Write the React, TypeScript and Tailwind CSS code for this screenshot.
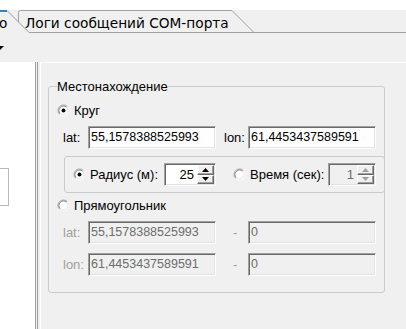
import React from "react";

const Radio = ({ checked = false }: { checked?: boolean }) => (
  <svg width="13" height="13" viewBox="0 0 13 13" className="shrink-0">
    <circle cx="6.5" cy="6.5" r="5" fill="#ffffff" />
    <path d="M2.61 10.39 A5.5 5.5 0 0 1 10.39 2.61" stroke="#a0a0a0" fill="none" />
    <path d="M10.39 2.61 A5.5 5.5 0 0 1 2.61 10.39" stroke="#ffffff" fill="none" />
    <path d="M3.32 9.68 A4.5 4.5 0 0 1 9.68 3.32" stroke="#8a8a8a" fill="none" />
    <path d="M9.68 3.32 A4.5 4.5 0 0 1 3.32 9.68" stroke="#e3e3e3" fill="none" />
    {checked && <circle cx="6.5" cy="6.5" r="2" fill="#000000" />}
  </svg>
);

const SpinBtn = ({ up, disabled }: { up?: boolean; disabled?: boolean }) => (
  <div className="flex-1 flex items-center justify-center bg-[#f0f0f0] border border-t-white border-l-white border-r-[#696969] border-b-[#696969] shadow-[inset_-1px_-1px_0_#a0a0a0]">
    <svg width="7" height="4" viewBox="0 0 7 4">
      <polygon points={up ? "3.5,0 7,4 0,4" : "0,0 7,0 3.5,4"} fill={disabled ? "#a0a0a0" : "#000000"} />
    </svg>
  </div>
);

const Spin = ({ value, width, disabled }: { value: string; width: string; disabled?: boolean }) => (
  <div
    className={`flex h-[23px] ${width} border border-[#a0a0a0] border-r-white border-b-white shadow-[inset_1px_1px_0_#696969,inset_-1px_-1px_0_#e3e3e3] p-[1px] ${
      disabled ? "bg-[#f0f0f0] text-[#6d6d6d]" : "bg-white text-black"
    }`}
  >
    <div className="flex-1 text-right pr-[3px] leading-[19px]">{value}</div>
    <div className="flex flex-col w-[17px]">
      <SpinBtn up disabled={disabled} />
      <SpinBtn disabled={disabled} />
    </div>
  </div>
);

const Field = ({ value, disabled }: { value: string; disabled?: boolean }) => (
  <div
    className={`h-[23px] w-[128px] border border-[#a0a0a0] border-r-white border-b-white shadow-[inset_1px_1px_0_#696969,inset_-1px_-1px_0_#e3e3e3] pl-[2px] leading-[21px] text-[12.5px] ${
      disabled ? "bg-[#f0f0f0] text-[#6d6d6d]" : "bg-white text-black"
    }`}
  >
    {value}
  </div>
);

export default function App() {
  return (
    <div className="w-[406px] h-[329px] overflow-hidden bg-[#f0f0f0] flex flex-col font-['Liberation_Sans',Arial,sans-serif] text-[13px] text-black">
      <div className="h-[10px] shrink-0 bg-white" />

      {/* tabs */}
      <div className="relative h-[23px] shrink-0 font-['DejaVu_Sans',sans-serif] text-[13.7px]">
        <svg className="absolute inset-0" width="406" height="23" viewBox="0 0 406 23">
          <path d="M18.5 22 V2.5 Q18.5 0.5 20.5 0.5 H232 L253.5 22" stroke="#a0a0a0" fill="none" />
          <polygon points="0,0 7,0 29,22 0,22" fill="#f0f0f0" />
          <path d="M7 0.5 L29 22.5" stroke="#9a9a9a" fill="none" />
          <rect x="0" y="0" width="7" height="2" fill="#3c7fb1" />
          <path d="M29 22.5 H406" stroke="#a0a0a0" fill="none" />
        </svg>
        <div className="relative flex h-full pt-[3px] leading-[20px]">
          <span className="-ml-[1px] w-[26px]">о</span>
          <span>Логи сообщений COM-порта</span>
        </div>
      </div>

      {/* toolbar */}
      <div className="h-[29px] shrink-0 pt-[13px]">
        <svg width="4" height="4" viewBox="0 0 4 4">
          <polygon points="0,0 4,0 0,4" fill="#000000" />
        </svg>
      </div>

      <div className="flex flex-1 min-h-0">
        {/* left panel */}
        <div className="w-[36px] shrink-0 bg-white border-r border-[#a0a0a0] pt-[106px]">
          <div className="w-[9px] h-[38px] border border-l-0 border-[#b9b9b9]" />
        </div>
        <div className="w-[1px] shrink-0" />
        <div className="w-[1px] shrink-0 bg-[#a0a0a0]" />
        <div className="w-[2px] shrink-0" />

        {/* main panel */}
        <div className="flex-1 border-l border-t border-white">
          <fieldset className="ml-[7px] mt-[16px] w-[337px] border border-[#cbcbcb] rounded-[3px] pl-[8px] pb-[16px]">
            <legend className="leading-[15px]">Местонахождение</legend>

            <div className="mt-[9px] flex items-center h-[15px]">
              <Radio checked />
              <span className="ml-[4px]">Круг</span>
            </div>

            <div className="mt-[8px] flex items-center">
              <span className="w-[31px] pl-[6px]">lat:</span>
              <Field value="55,1578388525993" />
              <span className="ml-[8px] w-[24px]">lon:</span>
              <Field value="61,4453437589591" />
            </div>

            <div className="mt-[7px] ml-[7px] -mr-[1px] border border-[#cbcbcb] rounded-[3px] pl-[8px] pt-[6px] pb-[6px] flex items-center">
              <Radio checked />
              <span className="ml-[4px] w-[74px]">Радиус (м):</span>
              <Spin value="25" width="w-[52px]" />
              <div className="ml-[17px]">
                <Radio />
              </div>
              <span className="ml-[4px] w-[78px]">Время (сек):</span>
              <Spin value="1" width="w-[48px]" disabled />
            </div>

            <div className="mt-[5px] flex items-center h-[15px]">
              <Radio />
              <span className="ml-[4px]">Прямоугольник</span>
            </div>

            <div className="mt-[8px] flex items-center">
              <span className="w-[31px] pl-[6px] text-[#a0a0a0]">lat:</span>
              <Field value="55,1578388525993" disabled />
              <span className="ml-[17px] w-[15px] text-[#a0a0a0]">-</span>
              <Field value="0" disabled />
            </div>

            <div className="mt-[9px] flex items-center">
              <span className="w-[31px] pl-[6px] text-[#a0a0a0]">lon:</span>
              <Field value="61,4453437589591" disabled />
              <span className="ml-[17px] w-[15px] text-[#a0a0a0]">-</span>
              <Field value="0" disabled />
            </div>
          </fieldset>
        </div>
      </div>
    </div>
  );
}
